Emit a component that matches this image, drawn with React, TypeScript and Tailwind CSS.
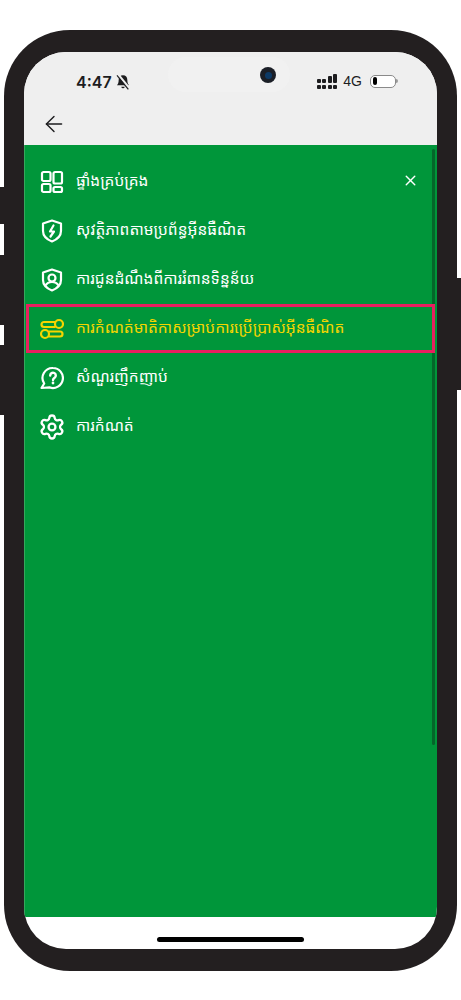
import { ArrowLeft, Settings, X } from "lucide-react";

const khmer = { fontFamily: '"Noto Sans Khmer", "Khmer OS", "Noto Sans", "DejaVu Sans", sans-serif' };

function DashboardIcon({ className }: { className?: string }) {
  return (
    <svg viewBox="0 0 24 24" className={className} fill="none" stroke="currentColor" strokeWidth="2.200">
      <rect x="2" y="2" width="8.500" height="9" rx="1.500" />
      <rect x="13.500" y="2" width="8.500" height="11.500" rx="1.500" />
      <rect x="2" y="14" width="8.500" height="8" rx="1.500" />
      <rect x="13.500" y="17" width="8.500" height="5" rx="1.500" />
    </svg>
  );
}

function ShieldBolt({ className }: { className?: string }) {
  return (
    <svg viewBox="0 0 24 24" className={className} fill="none" stroke="currentColor" strokeWidth="2.200" strokeLinejoin="round">
      <path d="M12 1.500 21 4.500v7.500c0 5-4 8.500-9 10.500-5-2-9-5.500-9-10.500V4.500z" />
      <path d="M13.500 6.500l-3.500 6h4L10.500 17.500" strokeLinecap="round" />
    </svg>
  );
}

function ShieldUser({ className }: { className?: string }) {
  return (
    <svg viewBox="0 0 24 24" className={className} fill="none" stroke="currentColor" strokeWidth="2.200" strokeLinejoin="round">
      <path d="M12 1.500 21 4.500v7.500c0 5-4 8.500-9 10.500-5-2-9-5.500-9-10.500V4.500z" />
      <circle cx="12" cy="10" r="3.500" />
      <path d="M5.500 17.500c1.200-2.200 3.500-3.500 6.500-3.500s5.300 1.300 6.500 3.500" />
    </svg>
  );
}

function Toggles({ className }: { className?: string }) {
  return (
    <svg viewBox="0 0 24 24" className={className} fill="none" stroke="currentColor" strokeWidth="2.200">
      <path d="M15.500 5H4a2.500 2.500 0 0 0 0 5h11.500" />
      <circle cx="19" cy="7" r="4" />
      <path d="M8.500 14.500H20a2.500 2.500 0 0 1 0 5H8.500" />
      <circle cx="5" cy="17" r="4" />
    </svg>
  );
}

function QuestionChat({ className }: { className?: string }) {
  return (
    <svg viewBox="0 0 24 24" className={className} fill="none" stroke="currentColor" strokeWidth="2.200" strokeLinecap="round" strokeLinejoin="round">
      <path d="M13 2a10 10 0 1 1-3.500 19.400L1.500 22l2.700-4.500A10 10 0 0 1 13 2z" />
      <path d="M10.200 9.500a2.800 2.800 0 1 1 4.400 2.300c-1 .7-1.600 1.200-1.600 2.200" strokeWidth="2.400" />
      <path d="M13 17v.1" strokeWidth="2.800" />
    </svg>
  );
}

function Gear({ className }: { className?: string }) {
  return <Settings className={`${className} scale-[1.150]`} strokeWidth={2} />;
}

const MENU = [
  { label: "ផ្ទាំងគ្រប់គ្រង", Icon: DashboardIcon },
  { label: "សុវត្ថិភាពតាមប្រព័ន្ធអ៊ីនធឺណិត", Icon: ShieldBolt },
  { label: "ការជូនដំណឹងពីការរំពានទិន្នន័យ", Icon: ShieldUser },
  { label: "ការកំណត់មាតិកាសម្រាប់ការប្រើប្រាស់អ៊ីនធឺណិត", Icon: Toggles, active: true },
  { label: "សំណួរញឹកញាប់", Icon: QuestionChat },
  { label: "ការកំណត់", Icon: Gear },
];

function StatusBar() {
  return (
    <div className="flex h-[40px] items-end pl-[52px] pr-[39px] text-[#1d1d1f]">
      <span className="text-[16px] font-semibold leading-5" style={{ fontFamily: "Inter, sans-serif" }}>
        4:47
      </span>
      <svg viewBox="0 0 24 24" className="mb-[2px] ml-[3px] h-[16px] w-[16px]" fill="currentColor">
        <path d="M12 2c-4 0-6.500 3-6.500 7 0 4-1 6-2.500 8h18c-1.500-2-2.500-4-2.500-8 0-4-2.500-7-6.500-7z" />
        <path d="M9.500 19a2.500 2.500 0 0 0 5 0z" />
        <path d="M4.500 0.500l17 21" fill="none" stroke="#efefef" strokeWidth="3.500" />
        <path d="M3 2l17 21" fill="none" stroke="currentColor" strokeWidth="1.800" />
      </svg>
      <div className="ml-auto flex items-center gap-[6px] pb-[3px]">
        <div className="flex items-end gap-[1.500px]">
          {[4, 4, 7, 9].map((h, i) => (
            <div key={i} className="flex flex-col gap-[2px]">
              <div className="w-[4px] rounded-[1px] bg-[#1d1d1f]" style={{ height: h }} />
              <div className="h-[4px] w-[4px] rounded-[1px] bg-[#1d1d1f]" />
            </div>
          ))}
        </div>
        <span className="text-[14px] leading-4" style={{ fontFamily: '"Liberation Sans", sans-serif' }}>
          4G
        </span>
        <div className="ml-[2px] flex items-center">
          <div className="flex h-[13px] w-[26px] items-center rounded-[5px] border border-[#8a8a8a] bg-white px-[2px]">
            <div className="h-[8px] w-[4px] rounded-[2px] bg-black" />
          </div>
          <div className="h-[4px] w-[2px] rounded-r-sm bg-[#9a9a9a]" />
        </div>
      </div>
    </div>
  );
}

export default function App() {
  return (
    <div className="h-[1000px] w-[461px] overflow-hidden bg-white pt-[30px]" style={khmer}>
      <div className="relative mx-[4px] h-[941px] w-[453px] rounded-[66px] bg-[#231f20] px-[20px] py-[22px]">
        {/* side buttons */}
        <div className="absolute left-[-4px] top-[157px] h-[37px] w-[4px] bg-[#231f20]" />
        <div className="absolute left-[-4px] top-[225px] h-[70px] w-[4px] bg-[#231f20]" />
        <div className="absolute left-[-4px] top-[315px] h-[70px] w-[4px] bg-[#231f20]" />
        <div className="absolute right-[-4px] top-[248px] h-[112px] w-[4px] bg-[#231f20]" />

        <div className="relative flex h-[897px] flex-col overflow-hidden rounded-[42px] bg-white">
          <div className="relative h-[93px] shrink-0 bg-[#efefef]">
            {/* camera island */}
            <div className="absolute left-[144px] top-[5px] h-[35px] w-[122px] rounded-[18px] bg-[#f1f1f1]" />
            <div className="absolute left-[236px] top-[15px] flex h-[16px] w-[16px] items-center justify-center rounded-full bg-[#1b1f27]">
              <div className="h-[7px] w-[7px] rounded-full bg-[#0d3a66]" />
            </div>
            <div className="relative">
              <StatusBar />
              <div className="pl-[17px] pt-[19px]">
                <ArrowLeft className="h-[26px] w-[26px] text-[#1d1d1f]" strokeWidth={1.300} />
              </div>
            </div>
          </div>

          <div className="relative h-[772px] shrink-0 border-l border-[#36a75c] bg-[#00963a] pt-[12px]">
            <div className="absolute right-[2px] top-[4px] h-[596px] w-[3px] rounded-full bg-[#04672a]" />
            <button className="absolute right-[18px] top-[27px] text-white">
              <X className="h-[17px] w-[17px]" strokeWidth={2} />
            </button>
            {MENU.map(({ label, Icon, active }) => (
              <div
                key={label}
                className={`flex h-[49px] items-center gap-[12px] ${
                  active
                    ? "relative ml-[1px] mr-[2px] border-[3px] border-[#e8205f] pl-[11px] text-[#f4d500]"
                    : "pl-[15px] text-white"
                }`}
              >
                <Icon className="h-[24px] w-[24px] shrink-0" />
                <span className="whitespace-nowrap pb-[3px] text-[15.500px] leading-6">{label}</span>
              </div>
            ))}
          </div>

          <div className="flex flex-1 items-start justify-center pt-[20px]">
            <div className="h-[5px] w-[147px] rounded-full bg-black" />
          </div>
        </div>
      </div>
    </div>
  );
}
